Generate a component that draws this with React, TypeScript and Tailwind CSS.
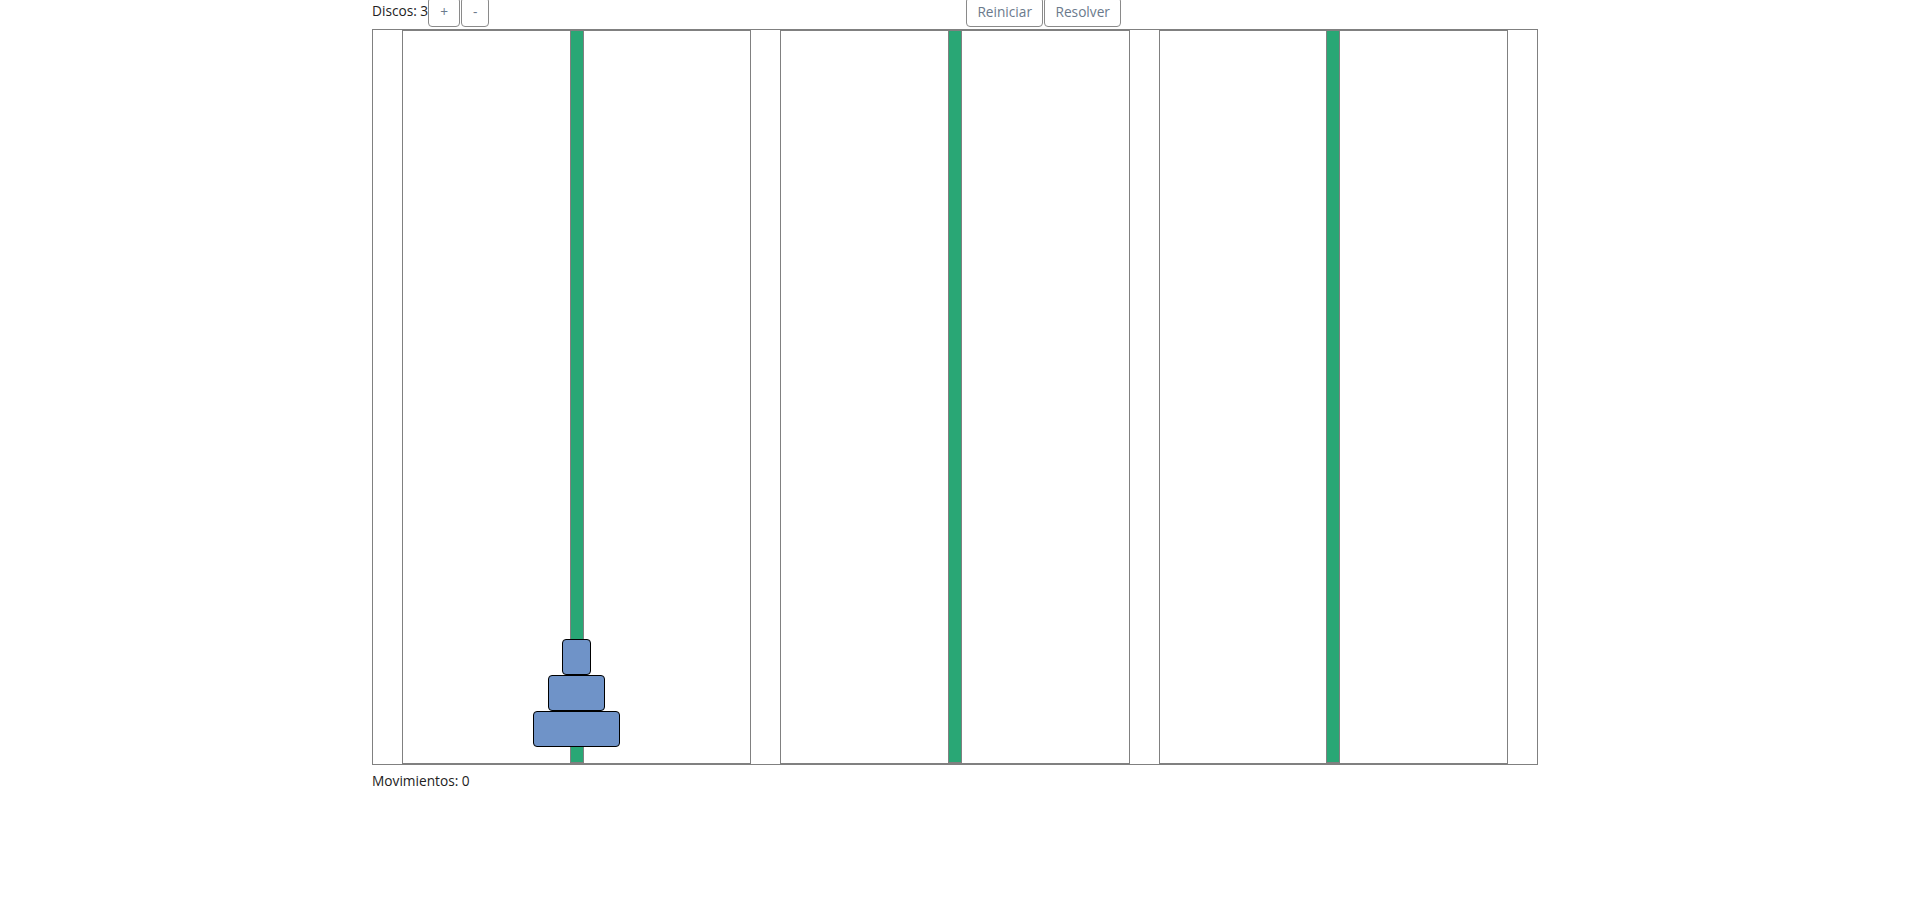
import React from "react";

const disks = [29, 57, 87];

function Tower({ withDisks }: { withDisks: boolean }) {
  return (
    <div className="relative flex-1 border border-[#808080] bg-white flex flex-col justify-end items-center pb-[16px]">
      <div className="absolute top-0 bottom-0 left-1/2 -translate-x-1/2 w-[14px] bg-[#29a775] border border-[#808080] border-t-0"></div>
      {withDisks &&
        disks.map((w) => (
          <div
            key={w}
            className="relative h-[36px] bg-[#6f93c8] border border-black rounded-[4px]"
            style={{ width: w }}
          ></div>
        ))}
    </div>
  );
}

export default function App() {
  return (
    <div className="w-full bg-white min-h-[907px]" style={{ fontFamily: '"Open Sans", "Noto Sans", sans-serif' }}>
      <div className="w-[1166px] mx-auto">
        <div className="flex items-start h-[29px] text-[13.7px]">
          <span className="text-[#222] leading-[20px] pt-[1px]">Discos: 3</span>
          <button className="-mt-[3px] h-[30px] w-[32px] border border-[#8a8a8a] rounded-[4px] text-[#6b7a8c] bg-white leading-none">+</button>
          <button className="-mt-[3px] ml-[1px] h-[30px] w-[28px] border border-[#8a8a8a] rounded-[4px] text-[#6b7a8c] bg-white leading-none">-</button>
          <button className="-mt-[3px] ml-[477px] h-[30px] w-[77px] border border-[#8a8a8a] rounded-[4px] text-[#6b7a8c] bg-white leading-none">Reiniciar</button>
          <button className="-mt-[3px] ml-[1px] h-[30px] w-[77px] border border-[#8a8a8a] rounded-[4px] text-[#6b7a8c] bg-white leading-none">Resolver</button>
        </div>
        <div className="flex gap-[29px] px-[29px] h-[736px] border border-[#808080]">
          <Tower withDisks={true} />
          <Tower withDisks={false} />
          <Tower withDisks={false} />
        </div>
        <div className="mt-[6px] text-[13.7px] text-[#222] leading-[20px]">Movimientos: 0</div>
      </div>
    </div>
  );
}
